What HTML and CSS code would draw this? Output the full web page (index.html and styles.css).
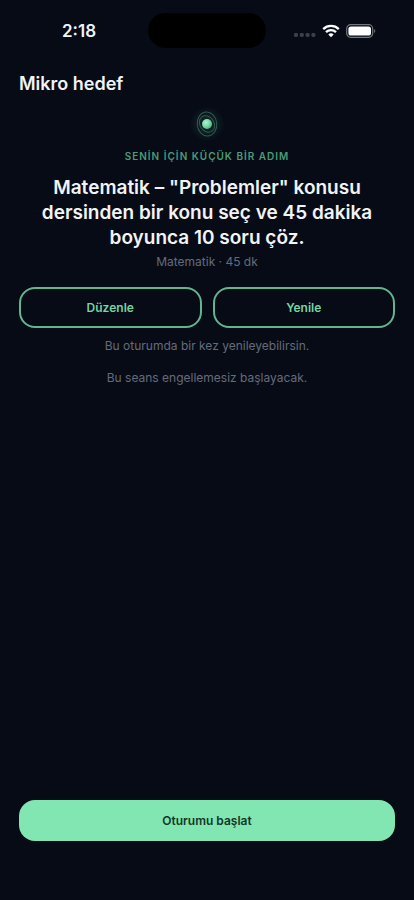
FILE: index.html
```html
<!DOCTYPE html>
<html lang="tr">
<head>
<meta charset="utf-8">
<meta name="viewport" content="width=device-width, initial-scale=1">
<title>Mikro hedef</title>
<link rel="stylesheet" href="styles.css">
</head>
<body>
<div class="screen">
  <div class="status">
    <time class="clock">2:18</time>
    <div class="island"></div>
    <div class="indicators">
      <svg class="signal" viewBox="0 0 22 4" aria-hidden="true"><rect x="0" width="4" height="4" rx="1.4"/><rect x="5.8" width="4" height="4" rx="1.4"/><rect x="11.6" width="4" height="4" rx="1.4"/><rect x="17.4" width="4" height="4" rx="1.4"/></svg>
      <svg class="wifi" viewBox="0 0 18 14" aria-hidden="true"><path d="M1.2 5.1a11.2 11.2 0 0 1 15.6 0M4 8.2a7.2 7.2 0 0 1 10 0"/><path class="dot" d="M9 13.2 6.3 10.6a3.8 3.8 0 0 1 5.4 0Z"/></svg>
      <svg class="battery" viewBox="0 0 30 14" aria-hidden="true"><rect class="shell" x=".7" y=".7" width="26" height="12.6" rx="4"/><rect class="charge" x="2.4" y="2.4" width="22.6" height="9.2" rx="2.6"/><path class="tip" d="M28.2 5v4c1.4-.6 1.4-3.4 0-4Z"/></svg>
    </div>
  </div>
  <header class="bar"><h1>Mikro hedef</h1></header>
  <main class="content">
    <svg class="orb" viewBox="0 0 40 40" aria-hidden="true">
      <defs>
        <radialGradient id="halo"><stop offset="0" stop-color="#5ac894" stop-opacity=".18"/><stop offset="1" stop-color="#5ac894" stop-opacity="0"/></radialGradient>
        <radialGradient id="core" cx=".38" cy=".35" r=".7"><stop offset="0" stop-color="#b0f2cf"/><stop offset=".5" stop-color="#7cdcab"/><stop offset="1" stop-color="#4fae81"/></radialGradient>
      </defs>
      <circle cx="20" cy="20" r="18" fill="url(#halo)"/>
      <g class="rings"><ellipse cx="20" cy="20" rx="9.8" ry="12" transform="rotate(-6 20 20)"/><ellipse cx="20" cy="20" rx="7" ry="8.8" transform="rotate(-35 20 20)"/></g>
      <circle cx="20" cy="20" r="5" fill="url(#core)"/>
    </svg>
    <p class="eyebrow">SENİN İÇİN KÜÇÜK BİR ADIM</p>
    <h2>Matematik – "Problemler" konusu dersinden bir konu seç ve 45 dakika boyunca 10 soru çöz.</h2>
    <p class="note">Matematik · 45 dk</p>
    <div class="actions">
      <button type="button" class="button outline">Düzenle</button>
      <button type="button" class="button outline">Yenile</button>
    </div>
    <p class="note">Bu oturumda bir kez yenileyebilirsin.</p>
    <p class="note session">Bu seans engellemesiz başlayacak.</p>
  </main>
  <footer class="footer"><button type="button" class="button primary">Oturumu başlat</button></footer>
</div>
</body>
</html>
```
FILE: styles.css
```css
* { box-sizing: border-box; }
body {
  margin: 0;
  background: #060b16;
  color: #f1f3f5;
  font-family: Inter, "Liberation Sans", sans-serif;
}
h1, h2, p { margin: 0; }
.screen {
  min-height: 100vh;
  display: flex;
  flex-direction: column;
}
.status {
  display: grid;
  grid-template-columns: 1fr 118px 1fr;
  align-items: center;
  padding-top: 13px;
}
.clock {
  justify-self: center;
  padding-left: 10px;
  font-size: 17px;
  line-height: 20px;
  font-weight: 600;
}
.island {
  height: 35px;
  border-radius: 18px;
  background: #000;
}
.indicators {
  display: flex;
  align-items: center;
  justify-content: center;
  gap: 6px;
  padding-right: 11px;
}
.signal {
  width: 22px;
  height: 4px;
  margin-top: 8px;
  fill: #3b404a;
}
.wifi {
  width: 18px;
  height: 14px;
  fill: none;
  stroke: #fff;
  stroke-width: 2.3;
}
.wifi .dot { fill: #fff; stroke: none; }
.battery { width: 30px; height: 14px; }
.shell { fill: none; stroke: #737780; stroke-width: 1.2; }
.charge { fill: #fff; }
.tip { fill: #737780; }
.bar { padding: 24px 19px 8px; }
h1 {
  font-size: 18px;
  line-height: 24px;
  font-weight: 600;
}
.content {
  flex: 1;
  display: flex;
  flex-direction: column;
  align-items: center;
  padding: 0 19px;
  text-align: center;
}
.orb { width: 40px; height: 40px; }
.rings { fill: none; stroke: #315b50; stroke-width: 1; }
.eyebrow {
  margin: 4px 0 11px;
  color: #4a9b76;
  font-size: 10px;
  line-height: 16px;
  font-weight: 600;
  letter-spacing: 1px;
}
h2 {
  max-width: 344px;
  margin-bottom: 4px;
  font-size: 19px;
  line-height: 25px;
  font-weight: 600;
}
.note {
  color: #656b7a;
  font-size: 12px;
  line-height: 16px;
}
.actions {
  display: grid;
  grid-template-columns: 1fr 1fr;
  gap: 11px;
  width: 100%;
  margin: 17px 0 10px;
}
.button {
  height: 41px;
  padding: 0 16px;
  border: 0;
  border-radius: 16px;
  font-family: inherit;
  font-size: 12px;
  font-weight: 600;
}
.outline {
  border: 2px solid #62b58e;
  background: transparent;
  color: #75d5a2;
}
.session { margin-top: 16px; }
.footer { padding: 0 19px 59px; }
.primary {
  display: block;
  width: 100%;
  background: #82e6b2;
  color: #123829;
}
```
